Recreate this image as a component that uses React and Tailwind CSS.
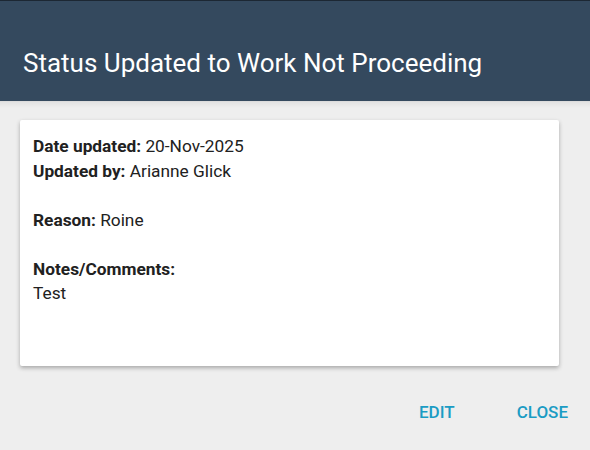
export default function App() {
    return (
        <div className="w-[590px] h-[450px] bg-[#eeeeee] flex flex-col overflow-hidden" style={{ fontFamily: "Roboto, 'Liberation Sans', sans-serif" }}>
            {/* Header */}
            <div className="h-[102px] shrink-0 bg-[#34495e] border-t border-[#1c2733] border-b border-b-[#dcdcdc] flex items-end px-[23px] pb-[21px]">
                <h1 className="text-[26px] leading-[34px] text-white font-normal">Status Updated to Work Not Proceeding</h1>
            </div>
            <div className="h-[6px] bg-gradient-to-b from-[#e2e2e2] to-[#eeeeee]" />

            {/* Card */}
            <div className="mt-[12px] mx-[20px] w-[539px] h-[246px] bg-white rounded-[2px] shadow-[0_2px_4px_rgba(0,0,0,0.3)] px-[13px] pt-[14px] text-[17.3px] leading-[24.5px] text-[#212121]">
                <p><span className="font-bold">Date updated:</span> 20-Nov-2025</p>
                <p><span className="font-bold">Updated by:</span> Arianne Glick</p>
                <p className="mt-[24.5px]"><span className="font-bold">Reason:</span> Roine</p>
                <p className="mt-[24.5px] font-bold">Notes/Comments:</p>
                <p>Test</p>
            </div>

            {/* Footer */}
            <div className="flex justify-end gap-[62px] pr-[22px] mt-[34px]">
                <button className="text-[17px] leading-[24px] font-medium text-[#1b9cc4] uppercase">Edit</button>
                <button className="text-[17px] leading-[24px] font-medium text-[#1b9cc4] uppercase">Close</button>
            </div>
        </div>
    );
}
